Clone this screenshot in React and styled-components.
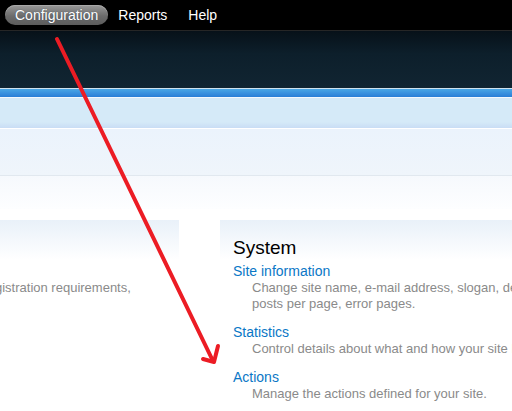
import styled, { createGlobalStyle } from "styled-components";

const GlobalStyle = createGlobalStyle`
  html, body {
    margin: 0;
    padding: 0;
    background: #ffffff;
    font-family: "Liberation Sans", Arial, sans-serif;
  }
  body {
    width: 512px;
    height: 411px;
    overflow: hidden;
  }
`;

const Page = styled.div`
  position: relative;
  width: 512px;
  height: 411px;
  overflow: hidden;
`;

const TopBar = styled.div`
  display: flex;
  align-items: center;
  gap: 10px;
  height: 30px;
  padding: 0 5px;
  background: #000000;
  border-bottom: 1px solid #262626;
`;

const NavItem = styled.a`
  display: block;
  height: 20px;
  line-height: 20px;
  padding: 0 ${(p) => (p.$active ? "10px" : "0")};
  margin-right: ${(p) => (p.$active ? "0" : "11px")};
  border-radius: 10px;
  font-size: 14px;
  color: #ffffff;
  text-decoration: none;
  text-shadow: ${(p) => (p.$active ? "0 0 1px #3a4a5a" : "none")};
  background: ${(p) =>
    p.$active ? "linear-gradient(#9a9a9a, #6c6c6c 55%, #5c5c5c)" : "none"};
  box-shadow: ${(p) => (p.$active ? "inset 0 1px 0 #a8a8a8" : "none")};
`;

const Banner = styled.div`
  height: 57px;
  background: linear-gradient(#071119, #0d1f2b 40%, #112532);
`;

const BlueStripe = styled.div`
  height: 8px;
  border-top: 1px solid #cfe2ee;
  border-bottom: 1px solid #f4f9fd;
  background: linear-gradient(#4aa7e5, #3a92df 50%, #2a7ed6);
`;

const SubBar = styled.div`
  height: 30px;
  background: linear-gradient(#d5eaf8 80%, #c9ddf5);
  border-bottom: 1px solid #ffffff;
`;

const TabBar = styled.div`
  height: 46px;
  background: linear-gradient(#ebf3fc, #eff5fb);
  border-bottom: 1px solid #e1e8ef;
`;

const Fade = styled.div`
  height: 33px;
  background: linear-gradient(#f6f9fd, #fdfeff);
`;

const Content = styled.div`
  display: grid;
  grid-template-columns: 179px 1fr;
  column-gap: 41px;
  padding-top: 11px;
`;

const Column = styled.div`
  display: flex;
  flex-direction: column;
  gap: ${(p) => p.$gap || 0}px;
`;

const Panel = styled.div`
  height: ${(p) => (p.$height ? `${p.$height}px` : "auto")};
  padding: ${(p) => p.$pad || "0"};
  background: linear-gradient(#e9f1f9, #ffffff 40px);
`;

const Heading = styled.h3`
  margin: 0 0 2px;
  font-size: 19px;
  font-weight: normal;
  line-height: 24px;
  color: #000000;
`;

const Item = styled.div`
  margin-bottom: 11px;
`;

const ItemLink = styled.a`
  display: block;
  font-size: 14px;
  line-height: 18px;
  color: #0a77c6;
  text-decoration: none;
`;

const Description = styled.div`
  padding-left: ${(p) => (p.$flush ? "0" : "19px")};
  text-indent: ${(p) => (p.$flush ? "-5px" : "0")};
  font-size: 13px;
  line-height: 16px;
  color: #8a8a8a;
  white-space: nowrap;
`;

const Arrow = styled.svg`
  position: absolute;
  left: 0;
  top: 0;
  pointer-events: none;
`;

const items = [
  {
    title: "Site information",
    lines: [
      "Change site name, e-mail address, slogan, default front page, and number of",
      "posts per page, error pages.",
    ],
  },
  {
    title: "Statistics",
    lines: ["Control details about what and how your site logs."],
  },
  {
    title: "Actions",
    lines: ["Manage the actions defined for your site."],
  },
];

export default function App() {
  return (
    <Page>
      <GlobalStyle />
      <TopBar>
        <NavItem $active>Configuration</NavItem>
        <NavItem>Reports</NavItem>
        <NavItem>Help</NavItem>
      </TopBar>
      <Banner />
      <BlueStripe />
      <SubBar />
      <TabBar />
      <Fade />
      <Content>
        <Column $gap={10}>
          <Panel $height={155} $pad="60px 0 0">
            <Description $flush>gistration requirements,</Description>
          </Panel>
          <Panel $height={60} />
        </Column>
        <Column>
          <Panel $pad="16px 0 0 13px">
            <Heading>System</Heading>
            {items.map((it) => (
              <Item key={it.title}>
                <ItemLink>{it.title}</ItemLink>
                {it.lines.map((l) => (
                  <Description key={l}>{l}</Description>
                ))}
              </Item>
            ))}
          </Panel>
        </Column>
      </Content>
      <Arrow width="512" height="411" viewBox="0 0 512 411">
        <g
          stroke="#ec1c24"
          strokeWidth="4"
          strokeLinecap="round"
          strokeLinejoin="round"
          fill="none"
        >
          <path d="M57 39 L213 361" />
          <path d="M203 359 L214 362 L218 346" />
        </g>
      </Arrow>
    </Page>
  );
}
